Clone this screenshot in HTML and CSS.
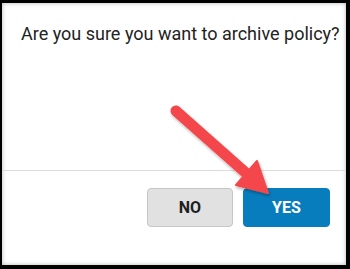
FILE: index.html
```html
<!DOCTYPE html>
<html lang="en">
<head>
  <meta charset="UTF-8">
  <title>Archive policy</title>
  <link rel="stylesheet" href="styles.css">
</head>
<body>
  <div class="frame">
    <div class="dialog">
      <div class="dialog-body">
        <p class="question">Are you sure you want to archive policy?</p>
      </div>
      <div class="dialog-footer">
        <button class="btn btn-no">NO</button>
        <button class="btn btn-yes">YES</button>
      </div>
    </div>

    <!-- callout arrow pointing at YES -->
    <svg class="callout" width="350" height="269" viewBox="0 0 350 269">
      <defs>
        <filter id="sombra" x="-20%" y="-20%" width="140%" height="140%">
          <feDropShadow dx="1" dy="2" stdDeviation="1.5" flood-color="#000" flood-opacity="0.3"/>
        </filter>
      </defs>
      <g filter="url(#sombra)" fill="#f3474b" stroke="#f3474b">
        <line x1="176" y1="111" x2="246" y2="173" stroke-width="11" stroke-linecap="round"/>
        <polygon points="236,185 257,161 268,193" stroke-width="2" stroke-linejoin="round"/>
      </g>
    </svg>
  </div>
</body>
</html>
```

FILE: styles.css
```css
html, body {
  margin: 0;
  padding: 0;
  background: #000;
}

body {
  width: 350px;
  height: 269px;
  overflow: hidden;
}

.frame {
  position: relative;
  box-sizing: border-box;
  width: 350px;
  height: 269px;
  border-style: solid;
  border-color: #000;
  border-width: 3px 4px 4px 2px;
  background: #fff;
}

.dialog {
  height: 100%;
  display: flex;
  flex-direction: column;
  font-family: Roboto, 'Liberation Sans', Arial, sans-serif;
  box-shadow: inset 0 0 4px rgba(0, 0, 0, 0.3);
}

.dialog-body {
  box-sizing: border-box;
  height: 168px;
  padding: 20px 0 0 19px;
  border-bottom: 1px solid #dcdcdc;
}

.question {
  margin: 0;
  font-size: 18px;
  color: #222;
}

.dialog-footer {
  display: flex;
  justify-content: flex-end;
  gap: 10px;
  padding: 17px 16px 0 0;
}

.btn {
  box-sizing: border-box;
  height: 39px;
  border-radius: 4px;
  font-family: Roboto, 'Liberation Sans', Arial, sans-serif;
  font-size: 16px;
  font-weight: bold;
  cursor: pointer;
}

.btn-no {
  width: 86px;
  background: #e1e1e1;
  color: #1e1e1e;
  border: 1px solid #c6c6c6;
}

.btn-yes {
  width: 87px;
  background: #077dbd;
  color: #fff;
  border: 1px solid #077dbd;
}

.callout {
  position: absolute;
  left: -2px;
  top: -3px;
  pointer-events: none;
}
```
